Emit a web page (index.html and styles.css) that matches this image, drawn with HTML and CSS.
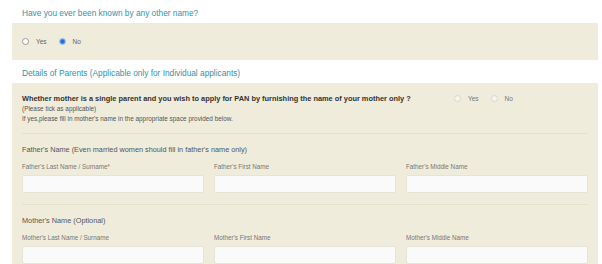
FILE: index.html
```html
<!DOCTYPE html>
<html>
  <head>
    <title>PAN Application - Personal Details</title>
    <link rel="stylesheet" href="styles.css">
  </head>
  <body>
    <div class="container">
      <h2 class="section-title">Have you ever been known by any other name?</h2>
      <div class="panel panel-short">
        <div class="radio-group">
          <label class="radio"><input type="radio" name="other-name" value="yes"> Yes</label>
          <label class="radio"><input type="radio" name="other-name" value="no" checked> No</label>
        </div>
      </div>

      <h2 class="section-title">Details of Parents (Applicable only for Individual applicants)</h2>
      <div class="panel">
        <div class="single-parent">
          <div class="question">
            <p class="question-text">Whether mother is a single parent and you wish to apply for PAN by furnishing the name of your mother only ?</p>
            <p class="hint">(Please tick as applicable)</p>
            <p class="hint">If yes,please fill in mother's name in the appropriate space provided below.</p>
          </div>
          <div class="radio-group light">
            <label class="radio"><input type="radio" name="single-parent" value="yes"> Yes</label>
            <label class="radio"><input type="radio" name="single-parent" value="no"> No</label>
          </div>
        </div>

        <div class="name-block">
          <h3 class="block-title">Father's Name (Even married women should fill in father's name only)</h3>
          <div class="form-row">
            <div class="form-group">
              <label for="f-last">Father's Last Name / Surname<span class="req">*</span></label>
              <input type="text" id="f-last">
            </div>
            <div class="form-group">
              <label for="f-first">Father's First Name</label>
              <input type="text" id="f-first">
            </div>
            <div class="form-group">
              <label for="f-middle">Father's Middle Name</label>
              <input type="text" id="f-middle">
            </div>
          </div>
        </div>

        <div class="name-block">
          <h3 class="block-title">Mother's Name (Optional)</h3>
          <div class="form-row">
            <div class="form-group">
              <label for="m-last">Mother's Last Name / Surname</label>
              <input type="text" id="m-last">
            </div>
            <div class="form-group">
              <label for="m-first">Mother's First Name</label>
              <input type="text" id="m-first">
            </div>
            <div class="form-group">
              <label for="m-middle">Mother's Middle Name</label>
              <input type="text" id="m-middle">
            </div>
          </div>
        </div>
      </div>
    </div>
  </body>
</html>
```

FILE: styles.css
```css
* {
  box-sizing: border-box;
}

body {
  font-family: "Liberation Sans", Arial, sans-serif;
  margin: 0;
  padding: 0;
  background: #fff;
  color: #444;
}

.container {
  margin-left: 12px;
  width: 586px;
}

.section-title {
  margin: 0;
  height: 23px;
  padding: 8px 10px 0;
  font-size: 8.3px;
  font-weight: normal;
  color: #2f93ab;
}

.panel {
  background-color: #efecdc;
  padding: 0 10px;
}

.panel-short {
  height: 37px;
  display: flex;
  align-items: center;
}

.radio-group {
  display: flex;
  align-items: center;
  gap: 12px;
}

.radio {
  display: flex;
  align-items: center;
  gap: 7px;
  font-size: 6.5px;
  color: #666;
}

.radio input {
  appearance: none;
  -webkit-appearance: none;
  margin: 0;
  width: 7px;
  height: 7px;
  border: 1px solid #999;
  border-radius: 50%;
  background: #fff;
}

.radio input:checked {
  border-color: #8db8f0;
  background: radial-gradient(circle, #1f6fe0 0 1.8px, #5c9bf0 2.3px);
}

.radio-group.light .radio input {
  border-color: #d8d6cc;
  background: #f6f5ee;
}

.radio-group.light .radio {
  color: #777;
}

.single-parent {
  display: flex;
  align-items: flex-start;
  padding: 11px 0 9px;
  border-bottom: 1px solid #e4e1cf;
}

.question {
  width: 432px;
}

.question p {
  margin: 0;
}

.question-text {
  font-size: 7.4px;
  font-weight: bold;
  color: #333;
  line-height: 10px;
}

.hint {
  font-size: 6.4px;
  color: #555;
  line-height: 10px;
}

.single-parent .radio-group {
  margin-top: 1px;
}

.name-block {
  padding: 10px 0 11px;
  border-bottom: 1px solid #e4e1cf;
}

.name-block:last-child {
  border-bottom: none;
  padding-bottom: 3px;
}

.block-title {
  margin: 0 0 8px;
  font-size: 7.3px;
  font-weight: normal;
  color: #555;
  line-height: 11px;
}

.form-row {
  display: grid;
  grid-template-columns: repeat(3, 1fr);
  gap: 10px;
}

.form-group label {
  display: block;
  font-size: 6.3px;
  color: #777;
  margin-bottom: 4px;
  line-height: 8px;
}

.req {
  color: #e0502e;
}

.form-group input {
  display: block;
  width: 100%;
  height: 18px;
  border: 1px solid #e6e4d8;
  border-radius: 2px;
  background: #fafafa;
}
```
